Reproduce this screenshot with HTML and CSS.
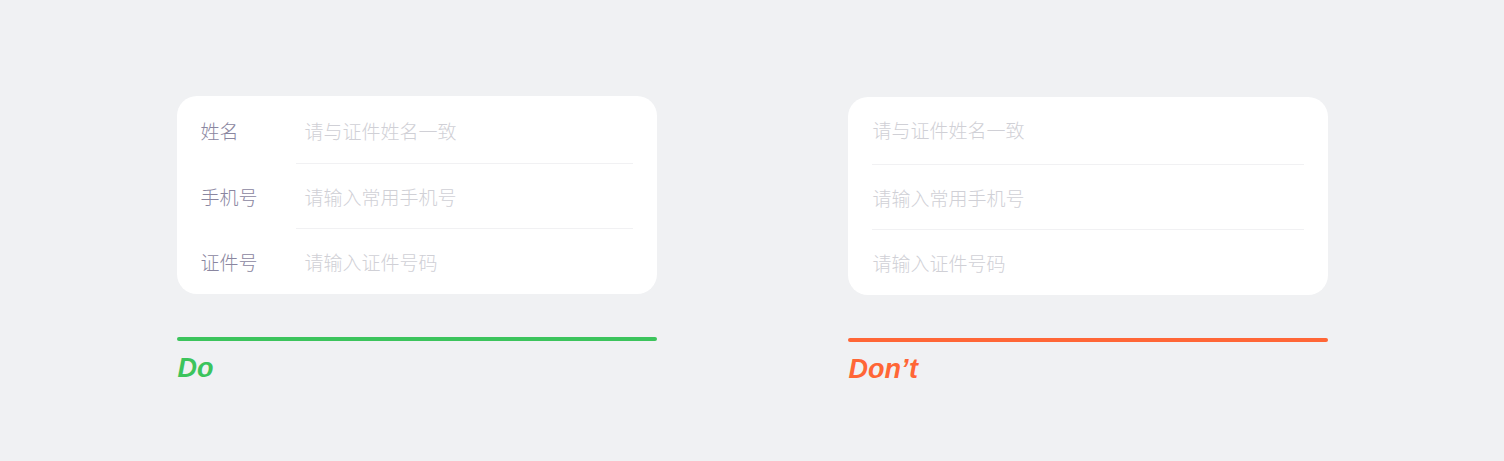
FILE: index.html
```html
<!DOCTYPE html>
<html lang="zh-CN">
<head>
<meta charset="utf-8">
<link rel="stylesheet" href="styles.css">
</head>
<body>
<main class="page">
  <section class="col">
    <div class="card">
      <div class="row row-first">
        <span class="label">姓名</span>
        <span class="field">请与证件姓名一致</span>
      </div>
      <div class="row">
        <span class="label">手机号</span>
        <span class="field">请输入常用手机号</span>
      </div>
      <div class="row row-last">
        <span class="label">证件号</span>
        <span class="field">请输入证件号码</span>
      </div>
    </div>
    <div class="bar bar-do"></div>
    <div class="verdict verdict-do">Do</div>
  </section>
  <section class="col col-dont">
    <div class="card card-plain">
      <div class="row row-first">
        <span class="field">请与证件姓名一致</span>
      </div>
      <div class="row">
        <span class="field">请输入常用手机号</span>
      </div>
      <div class="row row-last">
        <span class="field">请输入证件号码</span>
      </div>
    </div>
    <div class="bar bar-dont"></div>
    <div class="verdict verdict-dont">Don’t</div>
  </section>
</main>
</body>
</html>
```

FILE: styles.css
```css
html, body {
  margin: 0;
  padding: 0;
  background: #f0f1f3;
}
body {
  width: 1504px;
  height: 461px;
  overflow: hidden;
  font-family: "Noto Sans CJK SC", "Noto Sans", sans-serif;
}
.page {
  display: flex;
  justify-content: center;
  gap: 191px;
  padding-top: 96px;
}
.col {
  width: 480px;
  display: flex;
  flex-direction: column;
}
.col-dont {
  padding-top: 1px;
}
.card {
  background: #ffffff;
  border-radius: 20px;
  padding: 0 24px;
  height: 198px;
  box-sizing: border-box;
  display: flex;
  flex-direction: column;
}
.row {
  display: flex;
  align-items: stretch;
  height: 65px;
  font-size: 19px;
  font-weight: 300;
  line-height: 1;
}
.row-first {
  height: 68px;
}
.label {
  width: 95px;
  flex: none;
  display: flex;
  align-items: center;
  color: #8a86a0;
}
.field {
  flex: 1;
  display: flex;
  align-items: center;
  padding-left: 9px;
  color: #d0d0d6;
  border-bottom: 1px solid #f1f1f3;
}
.row-first .field {
  padding-top: 1px;
}
.row-last .field {
  border-bottom: none;
}
.card-plain .field {
  padding-left: 1px;
}
.card-plain .row-first .field {
  padding-top: 0;
  padding-bottom: 2px;
}
.bar {
  margin-top: 43px;
  height: 4px;
  border-radius: 2px;
}
.bar-do {
  background: #3cc45c;
}
.bar-dont {
  background: #ff6636;
}
.verdict {
  margin-top: 12px;
  font-family: "Liberation Sans", Arial, sans-serif;
  font-weight: bold;
  font-style: italic;
  font-size: 27px;
  line-height: 30px;
  padding-left: 1px;
}
.verdict-do {
  color: #3cc45c;
}
.verdict-dont {
  color: #ff6636;
}
```
